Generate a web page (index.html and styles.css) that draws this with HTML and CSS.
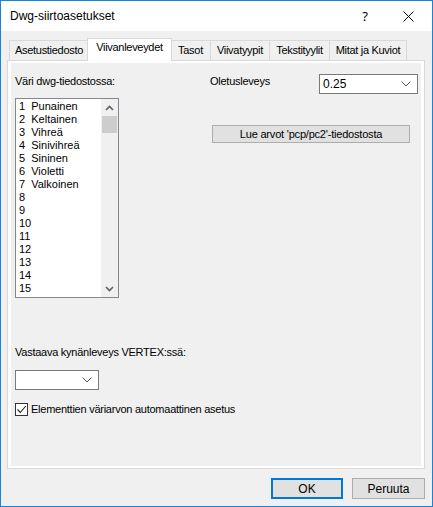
FILE: index.html
```html
<!DOCTYPE html>
<html lang="fi">
<head>
    <meta charset="UTF-8">
    <meta name="viewport" content="width=device-width, initial-scale=1.0">
    <title>Dwg-siirtoasetukset</title>
    <link rel="stylesheet" href="styles.css">
</head>
<body>
    <div class="window">
        <div class="titlebar">
            <span class="title">Dwg-siirtoasetukset</span>
            <span class="help">?</span>
            <span class="close">
                <svg width="11" height="11" viewBox="0 0 11 11"><path d="M0.5 0.5 L10.5 10.5 M10.5 0.5 L0.5 10.5" stroke="#000" stroke-width="1" fill="none"/></svg>
            </span>
        </div>

        <div class="body">
            <div class="tabs">
                <div class="tab" style="width:80px">Asetustiedosto</div>
                <div class="tab active" style="width:85px">Viivanleveydet</div>
                <div class="tab" style="width:41px">Tasot</div>
                <div class="tab" style="width:60px">Viivatyypit</div>
                <div class="tab" style="width:61px">Tekstityylit</div>
                <div class="tab" style="width:78px">Mitat ja Kuviot</div>
            </div>

            <div class="panel">
                <div class="page">
                    <div class="top-row">
                        <div class="left-col">
                            <div class="label">Väri dwg-tiedostossa:</div>
                            <div class="listbox">
                                <ul class="items">
                                    <li>1  Punainen</li>
                                    <li>2  Keltainen</li>
                                    <li>3  Vihreä</li>
                                    <li>4  Sinivihreä</li>
                                    <li>5  Sininen</li>
                                    <li>6  Violetti</li>
                                    <li>7  Valkoinen</li>
                                    <li>8</li>
                                    <li>9</li>
                                    <li>10</li>
                                    <li>11</li>
                                    <li>12</li>
                                    <li>13</li>
                                    <li>14</li>
                                    <li>15</li>
                                </ul>
                                <div class="scrollbar">
                                    <div class="arrow">
                                        <svg width="9" height="6" viewBox="0 0 9 6"><path d="M1 5 L4.5 1.5 L8 5" stroke="#606060" stroke-width="1.6" fill="none"/></svg>
                                    </div>
                                    <div class="thumb"></div>
                                    <div class="track"></div>
                                    <div class="arrow">
                                        <svg width="9" height="6" viewBox="0 0 9 6"><path d="M1 1 L4.5 4.5 L8 1" stroke="#606060" stroke-width="1.6" fill="none"/></svg>
                                    </div>
                                </div>
                            </div>
                        </div>

                        <div class="right-col">
                            <div class="width-row">
                                <span class="label">Oletusleveys</span>
                                <div class="combo wide">
                                    <span class="value">0.25</span>
                                    <svg width="10" height="6" viewBox="0 0 10 6"><path d="M0.5 0.5 L5 5 L9.5 0.5" stroke="#555" stroke-width="1" fill="none"/></svg>
                                </div>
                            </div>
                            <div class="btn read-btn">Lue arvot 'pcp/pc2'-tiedostosta</div>
                        </div>
                    </div>

                    <div class="label vertex-label">Vastaava kynänleveys VERTEX:ssä:</div>
                    <div class="combo narrow">
                        <span class="value"></span>
                        <svg width="10" height="6" viewBox="0 0 10 6"><path d="M0.5 0.5 L5 5 L9.5 0.5" stroke="#555" stroke-width="1" fill="none"/></svg>
                    </div>

                    <div class="check-row">
                        <span class="checkbox">
                            <svg width="11" height="11" viewBox="0 0 11 11"><path d="M1.5 5.5 L4.3 8.5 L9.8 2" stroke="#222" stroke-width="1.1" fill="none"/></svg>
                        </span>
                        <span class="label">Elementtien väriarvon automaattinen asetus</span>
                    </div>
                </div>
            </div>

            <div class="footer">
                <div class="btn default">OK</div>
                <div class="btn">Peruuta</div>
            </div>
        </div>
    </div>
</body>
</html>
```

FILE: styles.css
```css
* {
    box-sizing: border-box;
}
html, body {
    margin: 0;
    padding: 0;
}
body {
    font-family: "Liberation Sans", Arial, sans-serif;
    font-size: 11px;
    color: #000;
    background: #f0f0f0;
}
.window {
    width: 433px;
    height: 507px;
    border: 1px solid #1883d7;
    display: flex;
    flex-direction: column;
    background: #f0f0f0;
}
.titlebar {
    height: 30px;
    background: #fff;
    display: flex;
    align-items: center;
    padding-left: 9px;
}
.title {
    font-size: 12px;
    flex: 1;
}
.help {
    font-family: "Noto Sans", sans-serif;
    font-size: 13px;
    margin-right: 35px;
}
.close {
    display: flex;
    margin-right: 18px;
}
.body {
    flex: 1;
    display: flex;
    flex-direction: column;
}

/* tabs */
.tabs {
    display: flex;
    align-items: flex-end;
    margin-top: 7px;
    padding-left: 8px;
    height: 22px;
    position: relative;
    z-index: 1;
}
.tab {
    height: 20px;
    border: 1px solid #d9d9d9;
    border-bottom: none;
    margin-left: -1px;
    background: #f0f0f0;
    text-align: center;
    line-height: 19px;
    white-space: nowrap;
    letter-spacing: -0.3px;
}
.tab:first-child {
    margin-left: 0;
}
.tab.active {
    height: 23px;
    background: #fff;
    margin-left: -2px;
    margin-right: -1px;
    margin-bottom: -1px;
    line-height: 17px;
    position: relative;
    z-index: 2;
}
.panel {
    margin-left: 6px;
    width: 418px;
    height: 409px;
    border: 1px solid #d9d9d9;
    background: #fff;
    padding: 2px 3px 2px 3px;
}
.page {
    height: 100%;
    background: #f0f0f0;
    padding: 12px 0 0 4px;
}
.top-row {
    display: flex;
}
.left-col {
    width: 195px;
}
.label {
    line-height: 13px;
    white-space: nowrap;
    letter-spacing: -0.25px;
}
.listbox {
    margin-top: 10px;
    width: 104px;
    height: 200px;
    border: 1px solid #828790;
    background: #fff;
    display: flex;
}
.items {
    list-style: none;
    margin: 0;
    padding: 1px 0 0 3px;
    flex: 1;
    overflow: hidden;
}
.items li {
    line-height: 13px;
    height: 13px;
    white-space: pre;
}
.scrollbar {
    width: 17px;
    display: flex;
    flex-direction: column;
    background: #f0f0f0;
}
.scrollbar .arrow {
    height: 17px;
    display: flex;
    align-items: center;
    justify-content: center;
}
.scrollbar .thumb {
    height: 17px;
    margin: 0 1px;
    background: #cdcdcd;
}
.scrollbar .track {
    flex: 1;
}
.right-col {
    flex: 1;
}
.width-row {
    display: flex;
    align-items: flex-start;
    justify-content: space-between;
    padding-right: 3px;
}
.combo {
    height: 20px;
    border: 1px solid #7a7a7a;
    background: #fff;
    display: flex;
    align-items: center;
    justify-content: space-between;
    padding: 0 6px 0 3px;
}
.combo.wide {
    width: 99px;
    margin-top: -1px;
}
.combo.narrow {
    width: 84px;
    margin-top: 11px;
}
.combo .value {
    font-size: 12px;
}
.btn {
    height: 20px;
    border: 1px solid #adadad;
    background: #e1e1e1;
    display: flex;
    align-items: center;
    justify-content: center;
    white-space: nowrap;
}
.read-btn {
    width: 198px;
    margin: 31px 0 0 2px;
    height: 18px;
    letter-spacing: -0.2px;
}
.vertex-label {
    margin-top: 48px;
}
.check-row {
    display: flex;
    align-items: center;
    margin-top: 13px;
}
.checkbox {
    width: 13px;
    height: 13px;
    border: 1px solid #333;
    background: #fff;
    display: flex;
    align-items: center;
    justify-content: center;
    margin-right: 3px;
}
.footer {
    display: flex;
    justify-content: flex-end;
    gap: 9px;
    padding: 9px 7px 0 0;
}
.footer .btn {
    width: 73px;
    height: 21px;
    font-size: 12px;
}
.footer .btn.default {
    width: 72px;
    border: 2px solid #0078d7;
}
```
